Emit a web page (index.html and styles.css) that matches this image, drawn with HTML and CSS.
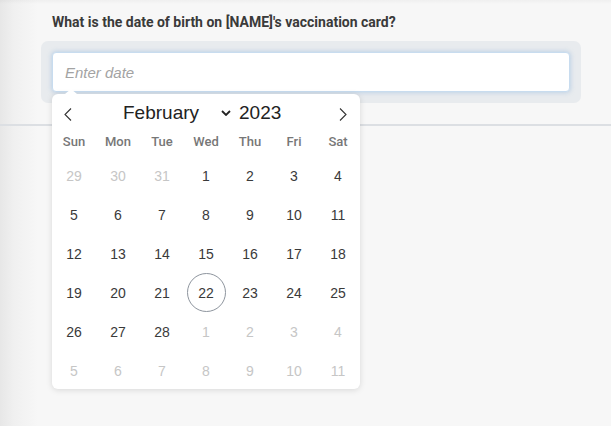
FILE: index.html
```html
<!DOCTYPE html>
<html lang="en">
<head>
<meta charset="utf-8">
<title>Date of birth</title>
<link rel="stylesheet" href="styles.css">
</head>
<body>
<div class="page">
  <section class="question">
    <div class="q-label">What is the date of birth on [NAME]'s vaccination card?</div>
    <div class="field-wrap">
      <div class="field">Enter date</div>
    </div>
  </section>
  <div class="divider"></div>

  <div class="datepicker">
    <div class="dp-arrow"></div>
    <div class="dp-header">
      <span class="nav">
        <svg width="8" height="13" viewBox="0 0 8 13"><polyline points="7,0.5 1,6.5 7,12.5" fill="none" stroke="#333" stroke-width="1.1"/></svg>
      </span>
      <div class="dp-title">
        <span class="month">February</span>
        <svg class="caret" width="10" height="6" viewBox="0 0 10 6"><polyline points="1,1 5,5 9,1" fill="none" stroke="#222" stroke-width="1.8"/></svg>
        <span class="year">2023</span>
      </div>
      <span class="nav">
        <svg width="8" height="13" viewBox="0 0 8 13"><polyline points="1,0.5 7,6.5 1,12.5" fill="none" stroke="#333" stroke-width="1.1"/></svg>
      </span>
    </div>
    <div class="dp-weekdays">
      <span>Sun</span><span>Mon</span><span>Tue</span><span>Wed</span><span>Thu</span><span>Fri</span><span>Sat</span>
    </div>
    <div class="dp-grid">
      <span class="day muted">29</span><span class="day muted">30</span><span class="day muted">31</span><span class="day">1</span><span class="day">2</span><span class="day">3</span><span class="day">4</span>
      <span class="day">5</span><span class="day">6</span><span class="day">7</span><span class="day">8</span><span class="day">9</span><span class="day">10</span><span class="day">11</span>
      <span class="day">12</span><span class="day">13</span><span class="day">14</span><span class="day">15</span><span class="day">16</span><span class="day">17</span><span class="day">18</span>
      <span class="day">19</span><span class="day">20</span><span class="day">21</span><span class="day"><span class="today">22</span></span><span class="day">23</span><span class="day">24</span><span class="day">25</span>
      <span class="day">26</span><span class="day">27</span><span class="day">28</span><span class="day muted">1</span><span class="day muted">2</span><span class="day muted">3</span><span class="day muted">4</span>
      <span class="day muted">5</span><span class="day muted">6</span><span class="day muted">7</span><span class="day muted">8</span><span class="day muted">9</span><span class="day muted">10</span><span class="day muted">11</span>
    </div>
  </div>
</div>
</body>
</html>
```

FILE: styles.css
```css
html, body {
  margin: 0;
  padding: 0;
  height: 100%;
}

body {
  background-color: #f7f7f7;
  background-image:
    linear-gradient(to bottom, rgba(0,0,0,0.03), rgba(0,0,0,0) 4px),
    linear-gradient(to right, #e7e7e7 0, #f0f0f0 14px, #f7f7f7 38px);
  font-family: Roboto, "Liberation Sans", Arial, sans-serif;
  color: #333;
  overflow: hidden;
}

.page {
  position: relative;
  height: 426px;
}

.question {
  padding: 14px 0 0 41px;
}

.q-label {
  margin-left: 11px;
  font-family: Roboto, "Liberation Sans", sans-serif;
  font-weight: 700;
  font-size: 14px;
  line-height: 16px;
  color: #3a3a3a;
}

.field-wrap {
  margin-top: 11px;
  width: 518px;
  padding: 11px;
  background: #e8ebee;
  border-radius: 7px;
}

.field {
  box-sizing: border-box;
  height: 40px;
  padding: 0 12px;
  display: flex;
  align-items: center;
  background: #fff;
  border: 1px solid #c8dcef;
  border-radius: 4px;
  box-shadow: 0 0 4px 1px rgba(120, 165, 215, 0.35);
  font-family: "Liberation Sans", Arial, sans-serif;
  font-style: italic;
  font-size: 15px;
  color: #a3a3a3;
}

.divider {
  margin-top: 21px;
  height: 2px;
  background: #dcdfe3;
}

.datepicker {
  position: absolute;
  top: 94px;
  left: 52px;
  width: 308px;
  height: 295px;
  background: #fff;
  border-radius: 6px;
  box-shadow: 0 1px 6px rgba(0, 0, 0, 0.13);
}

.dp-arrow {
  position: absolute;
  top: -5px;
  left: 13px;
  width: 0;
  height: 0;
  border-left: 6px solid transparent;
  border-right: 6px solid transparent;
  border-bottom: 5px solid #fff;
}

.dp-header {
  height: 38px;
  display: flex;
  align-items: center;
}

.nav {
  width: 32px;
  display: flex;
  justify-content: center;
  align-items: center;
  padding-top: 2px;
}

.nav:last-child {
  margin-left: auto;
  width: 34px;
}

.dp-title {
  display: flex;
  align-items: center;
  padding-left: 39px;
  font-family: "Liberation Sans", Arial, sans-serif;
  font-size: 19px;
  color: #222;
}

.caret {
  margin-left: 22px;
  margin-right: 8px;
}

.dp-weekdays {
  height: 18px;
  display: grid;
  grid-template-columns: repeat(7, 44px);
  align-items: center;
  font-family: Roboto, sans-serif;
  font-weight: 500;
  font-size: 13px;
  color: #777;
}

.dp-weekdays span {
  text-align: center;
}

.dp-grid {
  margin-top: 6px;
  display: grid;
  grid-template-columns: repeat(7, 44px);
  grid-auto-rows: 39px;
  font-family: "Liberation Sans", Arial, sans-serif;
  font-size: 14px;
  color: #3a3a3a;
}

.day {
  display: flex;
  justify-content: center;
  align-items: center;
}

.day.muted {
  color: #c6c6c6;
}

.today {
  box-sizing: border-box;
  width: 39px;
  height: 39px;
  border: 1px solid #8e959e;
  border-radius: 50%;
  display: flex;
  justify-content: center;
  align-items: center;
}
```
